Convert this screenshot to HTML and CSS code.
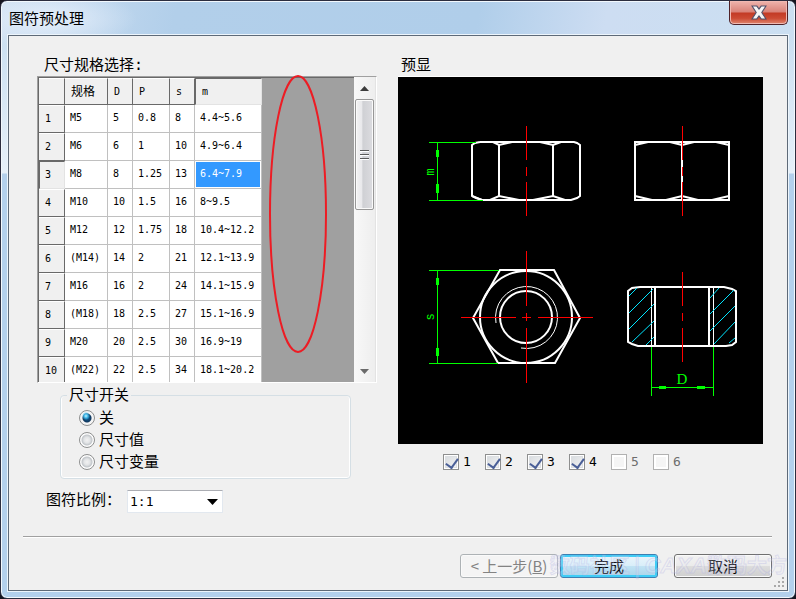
FILE: index.html
```html
<!DOCTYPE html>
<html lang="zh-CN">
<head>
<meta charset="utf-8">
<title>图符预处理</title>
<link rel="stylesheet" href="styles.css">
</head>
<body>
<div class="window">
  <header class="titlebar">
    <h1 class="title">图符预处理</h1>
    <button class="close" type="button" aria-label="关闭">
      <svg width="18" height="15" viewBox="0 0 16 14"><path d="M1.500 1h4.500L8 3.800l2-2.800h4.500L10.600 7l3.900 6h-4.500L8 10.200l-2 2.800H1.500L5.400 7z" fill="#f6f6f6" stroke="#50506a"/></svg>
    </button>
  </header>
  <form class="client">
    <main class="content">
      <section class="left">
        <h2 class="heading">尺寸规格选择:</h2>
        <div class="grid">
          <div class="sheet">
            <table>
              <colgroup><col class="c-num"><col class="c-spec"><col class="c-d"><col class="c-p"><col class="c-s"><col class="c-m"></colgroup>
              <thead><tr><th></th><th>规格</th><th>D</th><th>P</th><th>s</th><th class="active">m</th></tr></thead>
              <tbody>
                <tr><th>1</th><td>M5</td><td>5</td><td>0.8</td><td>8</td><td>4.4~5.6</td></tr>
                <tr><th>2</th><td>M6</td><td>6</td><td>1</td><td>10</td><td>4.9~6.4</td></tr>
                <tr><th class="active">3</th><td>M8</td><td>8</td><td>1.25</td><td>13</td><td class="selected">6.4~7.9</td></tr>
                <tr><th>4</th><td>M10</td><td>10</td><td>1.5</td><td>16</td><td>8~9.5</td></tr>
                <tr><th>5</th><td>M12</td><td>12</td><td>1.75</td><td>18</td><td>10.4~12.2</td></tr>
                <tr><th>6</th><td>(M14)</td><td>14</td><td>2</td><td>21</td><td>12.1~13.9</td></tr>
                <tr><th>7</th><td>M16</td><td>16</td><td>2</td><td>24</td><td>14.1~15.9</td></tr>
                <tr><th>8</th><td>(M18)</td><td>18</td><td>2.5</td><td>27</td><td>15.1~16.9</td></tr>
                <tr><th>9</th><td>M20</td><td>20</td><td>2.5</td><td>30</td><td>16.9~19</td></tr>
                <tr><th>10</th><td>(M22)</td><td>22</td><td>2.5</td><td>34</td><td>18.1~20.2</td></tr>
              </tbody>
            </table>
          </div>
          <div class="scrollbar">
            <button class="step" type="button" aria-label="向上滚动"><svg width="9" height="5" viewBox="0 0 9 5"><path d="M0 5L4.500 0 9 5z" fill="#3c3c3c"/></svg></button>
            <div class="thumb"><svg width="9" height="10" viewBox="0 0 9 10"><path d="M0 .5h9M0 4.500h9M0 8.500h9" stroke="#5a5a5a"/><path d="M0 1.500h9M0 5.500h9M0 9.500h9" stroke="#fff"/></svg></div>
            <button class="step down" type="button" aria-label="向下滚动"><svg width="9" height="5" viewBox="0 0 9 5"><path d="M0 0h9L4.500 5z" fill="#6a6a6a"/></svg></button>
          </div>
          <svg class="callout" width="60" height="280" viewBox="0 0 60 280"><ellipse cx="30" cy="140" rx="28" ry="138" fill="none" stroke="#ed1c24" stroke-width="2"/></svg>
        </div>
        <fieldset class="switch">
          <legend>尺寸开关</legend>
          <label class="option"><input type="radio" name="dim" checked>关</label>
          <label class="option"><input type="radio" name="dim">尺寸值</label>
          <label class="option"><input type="radio" name="dim">尺寸变量</label>
        </fieldset>
        <div class="scale">
          <label for="scale">图符比例：</label>
          <span class="combo">
            <select id="scale"><option>1:1</option></select>
            <svg class="arrow" width="11" height="6" viewBox="0 0 11 6"><path d="M0 0h11L5.500 6z"/></svg>
          </span>
        </div>
      </section>
      <section class="right">
        <h2 class="heading preview-heading">预显</h2>
        <svg class="preview" viewBox="398 77 365 367" role="img" aria-label="六角螺母预显">
          <rect x="398" y="77" width="365" height="367" fill="#000"/>
          <g fill="none" stroke="#fff" stroke-width="2">
            <path d="M480 142H574L577 143 580 145V196L577 198 571 200H482L476 198 472 196V145L475 143 480 142"/>
            <path d="M499 145V196M553 145V196"/>
            <path d="M493 142L499 145 512 142M540 142L553 145 561 142M472 196L482 200 490 200 499 196 519 200M533 200L553 196 565 200"/>
            <path d="M635 142H729V200H635zM682 142V200"/>
            <path d="M635 145L648 142M670 142L682 145 694 142M716 142L729 145M635 196L652 200M666 200L682 196 698 200M712 200L729 196"/>
            <path d="M500 270H554L580 318 555 363H498L473 318z"/>
            <circle cx="526" cy="317" r="46"/>
            <circle cx="526" cy="317" r="26"/>
            <path d="M496 323A31 31 0 1 1 521 348" stroke-width="1"/>
            <path d="M640 287H724L732 289 736 291V342L732 345 726 346H638L632 344 628 342V291L632 288z"/>
            <path d="M655 287V346M709 287V346"/>
            <path d="M651.500 287V346M713.500 287V346" stroke-width="1"/>
          </g>
          <path d="M629 296l8-8M629 313l24-24M629 329l25-25M632 342l22-21M646 345l8-8M710 298l9-10M710 314l24-24M710 331l25-25M714 344l21-22M729 343l6-5" fill="none" stroke="#00e5ff"/>
          <g stroke="#f00" shape-rendering="crispEdges">
            <path d="M526.500 126V160M526.500 167V176M526.500 182V216M526.500 251V306M526.500 313V321M526.500 328V383"/>
            <path d="M682.500 126V160M682.500 167V176M682.500 182V216M682.500 272V306M682.500 313V321M682.500 328V362"/>
            <path d="M461 317.500H516M522 317.500H531M538 317.500H593"/>
          </g>
          <g stroke="#0f0" fill="none" shape-rendering="crispEdges">
            <path d="M429 142.500H476M429 200.500H483M437.500 142V200M429 270.500H499M429 363.500H498M437.500 270V363M651.500 347V396M713.500 347V396M651 387.500H713"/>
            <path stroke-width="3" d="M437.500 150V157M437.500 184V193M437.500 278V285M437.500 348V356M659 387.500H666M697 387.500H705"/>
          </g>
          <g class="dim" fill="#0f0" text-anchor="middle">
            <text transform="translate(434 172) rotate(-90)">m</text>
            <text transform="translate(434 317) rotate(-90)">s</text>
            <text class="dim-d" x="682" y="384">D</text>
          </g>
        </svg>
        <div class="views">
          <label><input type="checkbox" checked>1</label>
          <label><input type="checkbox" checked>2</label>
          <label><input type="checkbox" checked>3</label>
          <label><input type="checkbox" checked>4</label>
          <label class="off"><input type="checkbox" disabled>5</label>
          <label class="off"><input type="checkbox" disabled>6</label>
        </div>
      </section>
    </main>
    <footer class="footer">
      <button class="btn" type="button" disabled>&lt; 上一步(<u>B</u>)</button>
      <button class="btn primary" type="button">完成</button>
      <button class="btn cancel" type="button">取消</button>
      <span class="watermark">数码社区 | <i>CAXA</i>数码大方</span>
    </footer>
    <svg class="grip" width="12" height="12" viewBox="0 0 12 12"><path d="M8 0h2v2H8zM4 4h2v2H4zM8 4h2v2H8zM0 8h2v2H0zM4 8h2v2H4zM8 8h2v2H8z" fill="#a9a9a9"/></svg>
  </form>
</div>
</body>
</html>
```
FILE: styles.css
```css
* { box-sizing: border-box; }

body {
  margin: 0;
  background: #15151f;
  color: #000;
  font: 15px/20px "DejaVu Sans Mono", "Noto Sans CJK SC", monospace;
}

button, select, input { font: inherit; margin: 0; }
svg { display: block; }

.window {
  display: flex;
  flex-direction: column;
  min-height: 100vh;
  padding: 0 6px 6px 6px;
  border: 1px solid #2b2d3f;
  border-radius: 7px;
  box-shadow: inset 0 0 0 1px #f2f8fd;
  background:
    radial-gradient(ellipse 90px 30px at 46px 18px, #e4eefa, transparent) no-repeat,
    linear-gradient(100deg, #cfe0f2 0, #b2cfea 22%, #b0ceea 60%, #cdddf2 76%, #cbdff1 100%) 0 0 / 100% 35px no-repeat,
    linear-gradient(#cbdff1 35px, #e6f0f9 172px, #b3d0ec 173px);
}

.titlebar {
  display: flex;
  justify-content: space-between;
  align-items: flex-start;
  height: 33px;
  padding: 0 1px 0 2px;
}
.title {
  margin: 0;
  font: 15px/34px "Noto Sans CJK SC", sans-serif;
}
.close {
  display: flex;
  justify-content: center;
  align-items: center;
  width: 59px;
  height: 24px;
  padding: 0;
  border: 1px solid #4f2228;
  border-top: 0;
  border-radius: 0 0 5px 5px;
  box-shadow: inset 0 0 0 1px #f0b9b2;
  background: linear-gradient(#efb4ad 0, #d98278 48%, #c33a25 52%, #cc4a33 75%, #e0876f 100%);
}

.client {
  position: relative;
  flex: 1;
  display: flex;
  flex-direction: column;
  border: 1px solid #5e6a78;
  outline: 1px solid #edf5fc;
  margin: 1px;
  background: #f0f0f0;
}

.content {
  flex: 1;
  display: grid;
  grid-template-columns: minmax(0, 340fr) minmax(0, 365fr);
  gap: 21px;
  padding: 18px 24px 0 28px;
}
.heading {
  margin: 0;
  padding-left: 7px;
  font-size: 15px;
  font-weight: normal;
  line-height: 22px;
}
.preview-heading { padding-left: 3px; }

.grid {
  position: relative;
  display: flex;
  height: 307px;
  border: 1px solid #a0a0a0;
  border-right-color: #fff;
  border-bottom-color: #fff;
  background: #a0a0a0;
}
.sheet {
  flex: 1;
  overflow: hidden;
  border: solid #696969;
  border-width: 1px 0 0 1px;
  font-size: 10px;
}
table {
  width: 223px;
  table-layout: fixed;
  border-collapse: separate;
  border-spacing: 0;
}
.c-num { width: 26px; }
.c-spec { width: 43px; }
.c-d, .c-s { width: 25px; }
.c-p { width: 37px; }
.c-m { width: 67px; }
th, td {
  height: 28px;
  padding: 0 0 2px 5px;
  line-height: 14px;
  text-align: left;
  white-space: nowrap;
}
th {
  padding: 0 0 0 6px;
  font-weight: normal;
  background: #f0f0f0;
  border: solid;
  border-width: 1px 1px 1px 0;
  border-color: #fff #696969 #696969;
}
thead th { height: 27px; }
thead th:nth-child(2) { font-size: 12px; }
td {
  background: #fff;
  border: solid #c0c0c0;
  border-width: 0 1px 1px 0;
}
th.active {
  border-width: 1px;
  border-color: #696969 #e3e3e3 #e3e3e3 #696969;
}
tbody th.active { padding-left: 5px; }
td.selected {
  background: #3399ff;
  color: #fff;
  box-shadow: inset 0 0 0 1px #fff;
}

.scrollbar {
  display: flex;
  flex-direction: column;
  width: 22px;
  padding: 0 1px;
  border-right: 1px solid #e3e3e3;
  background: linear-gradient(90deg, #f8f8f8, #eee);
}
.step {
  display: flex;
  justify-content: center;
  align-items: center;
  height: 22px;
  padding: 0;
  border: 0;
  background: none;
}
.down { margin-top: auto; }
.thumb {
  display: flex;
  justify-content: center;
  align-items: center;
  height: 111px;
  border: 1px solid #979797;
  border-radius: 2px;
  box-shadow: inset 0 0 0 1px #fafafa;
  background: linear-gradient(90deg, #f3f3f3 0, #e8e8eb 35%, #cfd0d4 40%, #dcdce0 100%);
}
.callout {
  position: absolute;
  top: -3px;
  left: 230px;
}

.switch {
  min-width: 0;
  margin: 2px 26px 0 23px;
  padding: 2px 0 5px 18px;
  border: 1px solid #d5dfe5;
  border-radius: 4px;
  box-shadow: inset 0 -1px #fff, inset -1px 0 #fff, inset 1px 0 #fff;
}
.switch legend {
  margin-left: -12px;
  padding: 0 2px;
  line-height: 20px;
}
.option {
  display: flex;
  align-items: center;
  gap: 4px;
  height: 22px;
}
input[type="radio"] {
  appearance: none;
  width: 16px;
  height: 16px;
  border: 1px solid #8e8f8f;
  border-radius: 50%;
  background: radial-gradient(circle at 7px 7px, #f2f2f2 0, #e2e4e6 3px, #c2c6ca 5px, #fdfdfd 6px);
}
input[type="radio"]:checked {
  background: radial-gradient(circle at 6px 5px, #c8f0fc 0, #3ab4e6 2px, transparent 4px),
    radial-gradient(circle at 7px 7px, #0d5d97 0, #12395f 4px, #f4f4f4 5px);
}

.scale {
  display: flex;
  align-items: flex-start;
  margin: 11px 0 0 9px;
}
.scale label { width: 81px; white-space: nowrap; }
.combo { position: relative; display: block; }
.combo select {
  display: block;
  appearance: none;
  width: 96px;
  height: 23px;
  padding: 0 2px;
  border: 1px solid #e2e8ef;
  border-top-color: #abadb3;
  background: #fff;
  color: #000;
  font-size: 13px;
}
.arrow {
  position: absolute;
  top: 9px;
  right: 5px;
  pointer-events: none;
}

.preview {
  width: 100%;
  height: auto;
  border-top: 1px solid #fff;
}
.dim { font: 12px "Liberation Mono", monospace; }
.dim-d { font: 15px "Liberation Serif", serif; }

.views {
  display: flex;
  margin: 10px 0 0 45px;
}
.views label {
  display: flex;
  align-items: center;
  gap: 4px;
  width: 42px;
  height: 16px;
  font-size: 13px;
}
.views .off { color: #6d6d6d; }
input[type="checkbox"] {
  appearance: none;
  width: 16px;
  height: 16px;
  border: 1px solid #8e8f8f;
  box-shadow: inset 0 0 0 1px #fff, inset 0 0 0 2px #dcdfe2;
  background: linear-gradient(135deg, #d5d9dd, #f6f6f6);
}
input[type="checkbox"]:checked::before {
  content: "";
  display: block;
  width: 6px;
  height: 10px;
  margin: 1px 0 0 4px;
  border: solid #4a5f97;
  border-width: 0 2px 2px 0;
  transform: rotate(36deg);
}
input[type="checkbox"]:disabled {
  border-color: #b1b1b1;
  box-shadow: inset 0 0 0 2px #fff;
  background: #f5f5f5;
}

.footer {
  position: relative;
  display: flex;
  justify-content: flex-end;
  margin: 0 15px 0 14px;
  padding: 17px 0 12px;
  border-top: 1px solid #a0a0a0;
  box-shadow: inset 0 1px #fff;
}
.btn {
  width: 98px;
  height: 24px;
  padding: 0;
  border: 1px solid #707070;
  border-radius: 3px;
  box-shadow: inset 0 0 0 1px #fafafa;
  background: linear-gradient(#f2f2f2 0, #ebebeb 49%, #dddddd 50%, #cfcfcf 100%);
  color: #000;
  font: 15px/20px "Noto Sans CJK SC", sans-serif;
  white-space: nowrap;
}
.btn:disabled {
  border-color: #adb2b5;
  background: #f4f4f4;
  color: #838383;
}
.primary {
  margin: 0 16px 0 2px;
  border-color: #3c7fb1;
  box-shadow: inset 0 0 0 2px #3fcdf6;
  background: linear-gradient(#eaf5fb 0, #d9eef9 49%, #c1e3f4 50%, #a9d5ea 100%);
}
.watermark {
  position: absolute;
  top: 15px;
  right: -15px;
  color: rgba(240, 240, 250, 0.2);
  -webkit-text-stroke: 1px rgba(170, 170, 225, 0.3);
  font: bold 20px/26px "Noto Sans CJK SC", sans-serif;
  white-space: nowrap;
  pointer-events: none;
}
.watermark i { font: italic bold 22px/26px "Liberation Sans", sans-serif; }
.grip {
  position: absolute;
  right: 1px;
  bottom: 1px;
}
```
